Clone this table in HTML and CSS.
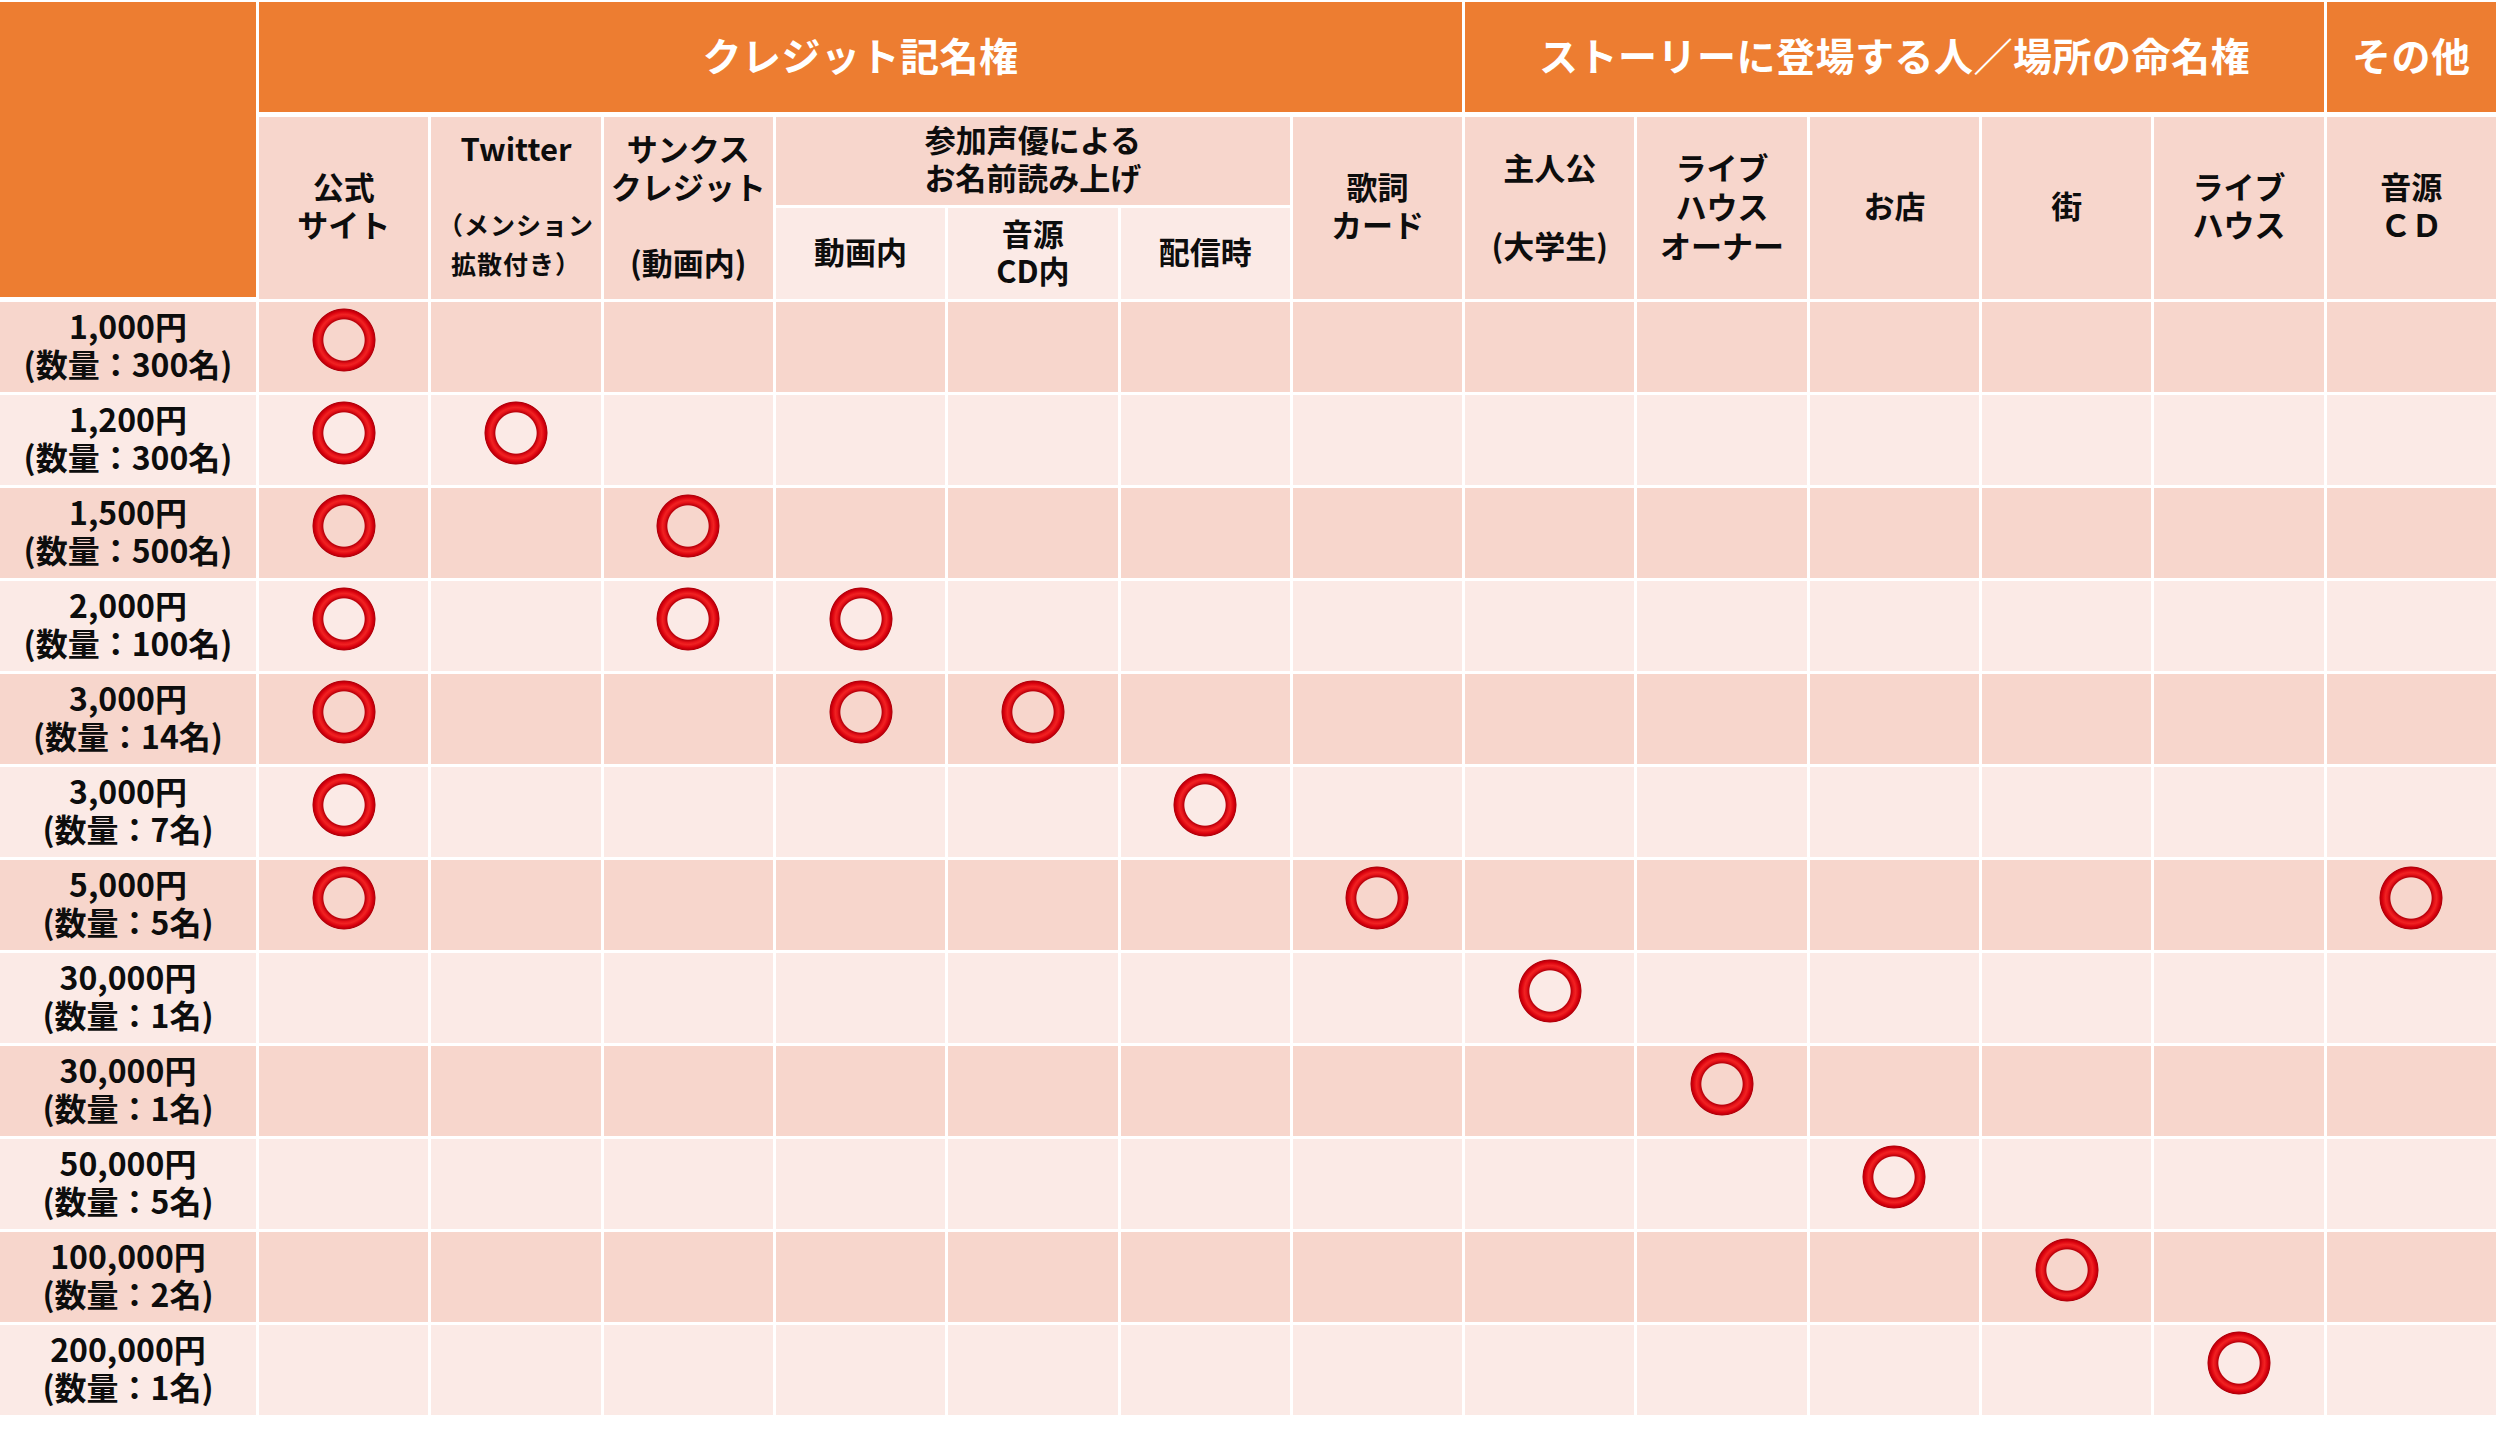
FILE: index.html
```html
<!DOCTYPE html>
<html lang="ja">
<head>
<meta charset="utf-8">
<title>リターン一覧</title>
<link rel="stylesheet" href="styles.css">
</head>
<body>
<div class="table">
  <div class="cell corner rs3"></div>
  <div class="cell top cs7"><div>クレジット記名権</div></div>
  <div class="cell top cs5"><div>ストーリーに登場する人／場所の命名権</div></div>
  <div class="cell top"><div>その他</div></div>

  <div class="cell hd rs2"><div>公式<br>サイト</div></div>
  <div class="cell hd rs2 tw"><div>Twitter<br><br><span class="sm">（メンション<br>拡散付き）</span></div></div>
  <div class="cell hd rs2"><div>サンクス<br>クレジット<br><br>(動画内)</div></div>
  <div class="cell hd cs3"><div>参加声優による<br>お名前読み上げ</div></div>
  <div class="cell hd rs2"><div>歌詞<br>カード</div></div>
  <div class="cell hd rs2 wide"><div>主人公<br><br>(大学生)</div></div>
  <div class="cell hd rs2 wide"><div>ライブ<br>ハウス<br>オーナー</div></div>
  <div class="cell hd rs2"><div>お店</div></div>
  <div class="cell hd rs2"><div>街</div></div>
  <div class="cell hd rs2"><div>ライブ<br>ハウス</div></div>
  <div class="cell hd rs2"><div>音源<br>ＣＤ</div></div>
  <div class="cell sub"><div>動画内</div></div>
  <div class="cell sub"><div>音源<br>CD内</div></div>
  <div class="cell sub"><div>配信時</div></div>

  <!-- row 1 -->
  <div class="cell a lbl"><div>1,000円<br>(数量：300名)</div></div>
  <div class="cell a"><span class="ok"></span></div>
  <div class="cell a"></div><div class="cell a"></div><div class="cell a"></div><div class="cell a"></div><div class="cell a"></div><div class="cell a"></div>
  <div class="cell a"></div><div class="cell a"></div><div class="cell a"></div><div class="cell a"></div><div class="cell a"></div><div class="cell a"></div>

  <!-- row 2 -->
  <div class="cell b lbl"><div>1,200円<br>(数量：300名)</div></div>
  <div class="cell b"><span class="ok"></span></div>
  <div class="cell b"><span class="ok"></span></div>
  <div class="cell b"></div><div class="cell b"></div><div class="cell b"></div><div class="cell b"></div><div class="cell b"></div>
  <div class="cell b"></div><div class="cell b"></div><div class="cell b"></div><div class="cell b"></div><div class="cell b"></div><div class="cell b"></div>

  <!-- row 3 -->
  <div class="cell a lbl"><div>1,500円<br>(数量：500名)</div></div>
  <div class="cell a"><span class="ok"></span></div>
  <div class="cell a"></div>
  <div class="cell a"><span class="ok"></span></div>
  <div class="cell a"></div><div class="cell a"></div><div class="cell a"></div><div class="cell a"></div>
  <div class="cell a"></div><div class="cell a"></div><div class="cell a"></div><div class="cell a"></div><div class="cell a"></div><div class="cell a"></div>

  <!-- row 4 -->
  <div class="cell b lbl"><div>2,000円<br>(数量：100名)</div></div>
  <div class="cell b"><span class="ok"></span></div>
  <div class="cell b"></div>
  <div class="cell b"><span class="ok"></span></div>
  <div class="cell b"><span class="ok"></span></div>
  <div class="cell b"></div><div class="cell b"></div><div class="cell b"></div>
  <div class="cell b"></div><div class="cell b"></div><div class="cell b"></div><div class="cell b"></div><div class="cell b"></div><div class="cell b"></div>

  <!-- row 5 -->
  <div class="cell a lbl"><div>3,000円<br>(数量：14名)</div></div>
  <div class="cell a"><span class="ok"></span></div>
  <div class="cell a"></div><div class="cell a"></div>
  <div class="cell a"><span class="ok"></span></div>
  <div class="cell a"><span class="ok"></span></div>
  <div class="cell a"></div><div class="cell a"></div>
  <div class="cell a"></div><div class="cell a"></div><div class="cell a"></div><div class="cell a"></div><div class="cell a"></div><div class="cell a"></div>

  <!-- row 6 -->
  <div class="cell b lbl"><div>3,000円<br>(数量：7名)</div></div>
  <div class="cell b"><span class="ok"></span></div>
  <div class="cell b"></div><div class="cell b"></div><div class="cell b"></div><div class="cell b"></div>
  <div class="cell b"><span class="ok"></span></div>
  <div class="cell b"></div>
  <div class="cell b"></div><div class="cell b"></div><div class="cell b"></div><div class="cell b"></div><div class="cell b"></div><div class="cell b"></div>

  <!-- row 7 -->
  <div class="cell a lbl"><div>5,000円<br>(数量：5名)</div></div>
  <div class="cell a"><span class="ok"></span></div>
  <div class="cell a"></div><div class="cell a"></div><div class="cell a"></div><div class="cell a"></div><div class="cell a"></div>
  <div class="cell a"><span class="ok"></span></div>
  <div class="cell a"></div><div class="cell a"></div><div class="cell a"></div><div class="cell a"></div><div class="cell a"></div>
  <div class="cell a"><span class="ok"></span></div>

  <!-- row 8 -->
  <div class="cell b lbl"><div>30,000円<br>(数量：1名)</div></div>
  <div class="cell b"></div><div class="cell b"></div><div class="cell b"></div><div class="cell b"></div><div class="cell b"></div><div class="cell b"></div><div class="cell b"></div>
  <div class="cell b"><span class="ok"></span></div>
  <div class="cell b"></div><div class="cell b"></div><div class="cell b"></div><div class="cell b"></div><div class="cell b"></div>

  <!-- row 9 -->
  <div class="cell a lbl"><div>30,000円<br>(数量：1名)</div></div>
  <div class="cell a"></div><div class="cell a"></div><div class="cell a"></div><div class="cell a"></div><div class="cell a"></div><div class="cell a"></div><div class="cell a"></div><div class="cell a"></div>
  <div class="cell a"><span class="ok"></span></div>
  <div class="cell a"></div><div class="cell a"></div><div class="cell a"></div><div class="cell a"></div>

  <!-- row 10 -->
  <div class="cell b lbl"><div>50,000円<br>(数量：5名)</div></div>
  <div class="cell b"></div><div class="cell b"></div><div class="cell b"></div><div class="cell b"></div><div class="cell b"></div><div class="cell b"></div><div class="cell b"></div><div class="cell b"></div><div class="cell b"></div>
  <div class="cell b"><span class="ok"></span></div>
  <div class="cell b"></div><div class="cell b"></div><div class="cell b"></div>

  <!-- row 11 -->
  <div class="cell a lbl"><div>100,000円<br>(数量：2名)</div></div>
  <div class="cell a"></div><div class="cell a"></div><div class="cell a"></div><div class="cell a"></div><div class="cell a"></div><div class="cell a"></div><div class="cell a"></div><div class="cell a"></div><div class="cell a"></div><div class="cell a"></div>
  <div class="cell a"><span class="ok"></span></div>
  <div class="cell a"></div><div class="cell a"></div>

  <!-- row 12 -->
  <div class="cell b lbl"><div>200,000円<br>(数量：1名)</div></div>
  <div class="cell b"></div><div class="cell b"></div><div class="cell b"></div><div class="cell b"></div><div class="cell b"></div><div class="cell b"></div><div class="cell b"></div><div class="cell b"></div><div class="cell b"></div><div class="cell b"></div><div class="cell b"></div>
  <div class="cell b"><span class="ok"></span></div>
  <div class="cell b"></div>
</div>
</body>
</html>
```

FILE: styles.css
```css
html, body {
  margin: 0;
  padding: 0;
  background: #ffffff;
}

body {
  padding-top: 2px;
  font-family: "Noto Sans CJK JP", "Noto Sans", sans-serif;
  color: #0d0d0d;
}

.table {
  width: 2496px;
  display: grid;
  grid-template-columns: 256px repeat(13, 1fr);
  grid-template-rows: 112px 88px 91px repeat(12, 90px);
  gap: 3px;
  background: #ffffff;
}

.cell {
  display: flex;
  align-items: center;
  justify-content: center;
  text-align: center;
  padding-bottom: 6px;
  line-height: 38px;
  font-size: 31px;
  font-weight: 700;
}

.rs2 { grid-row: span 2; }
.rs3 { grid-row: span 3; }
.cs3 { grid-column: span 3; }
.cs5 { grid-column: span 5; }
.cs7 { grid-column: span 7; }

.corner {
  background: #ed7d31;
  margin-bottom: 2px;
}

.top {
  background: #ed7d31;
  color: #ffffff;
  font-size: 39px;
  font-weight: 700;
  margin-bottom: 2px;
  letter-spacing: 0.5px;
}

.hd {
  background: #f7d6cc;
}

.wide {
  line-height: 39px;
}

.sub {
  background: #fbeae6;
  line-height: 37px;
}

.tw {
  line-height: 37px;
}

.sm {
  font-size: 25px;
  line-height: 35px;
  letter-spacing: 1px;
}

.a {
  background: #f7d6cc;
}

.b {
  background: #fbeae6;
}

.lbl {
  font-size: 32px;
  line-height: 38px;
}

.ok {
  display: block;
  width: 64px;
  height: 64px;
  margin-bottom: 8px;
  border-radius: 50%;
  background: radial-gradient(circle closest-side,
    rgba(255, 255, 255, 0) 63%,
    #b8000a 66%,
    #e8141a 74%,
    #f02222 80%,
    #d9000d 90%,
    #b0000a 97%,
    rgba(176, 0, 10, 0) 100%);
}
```
